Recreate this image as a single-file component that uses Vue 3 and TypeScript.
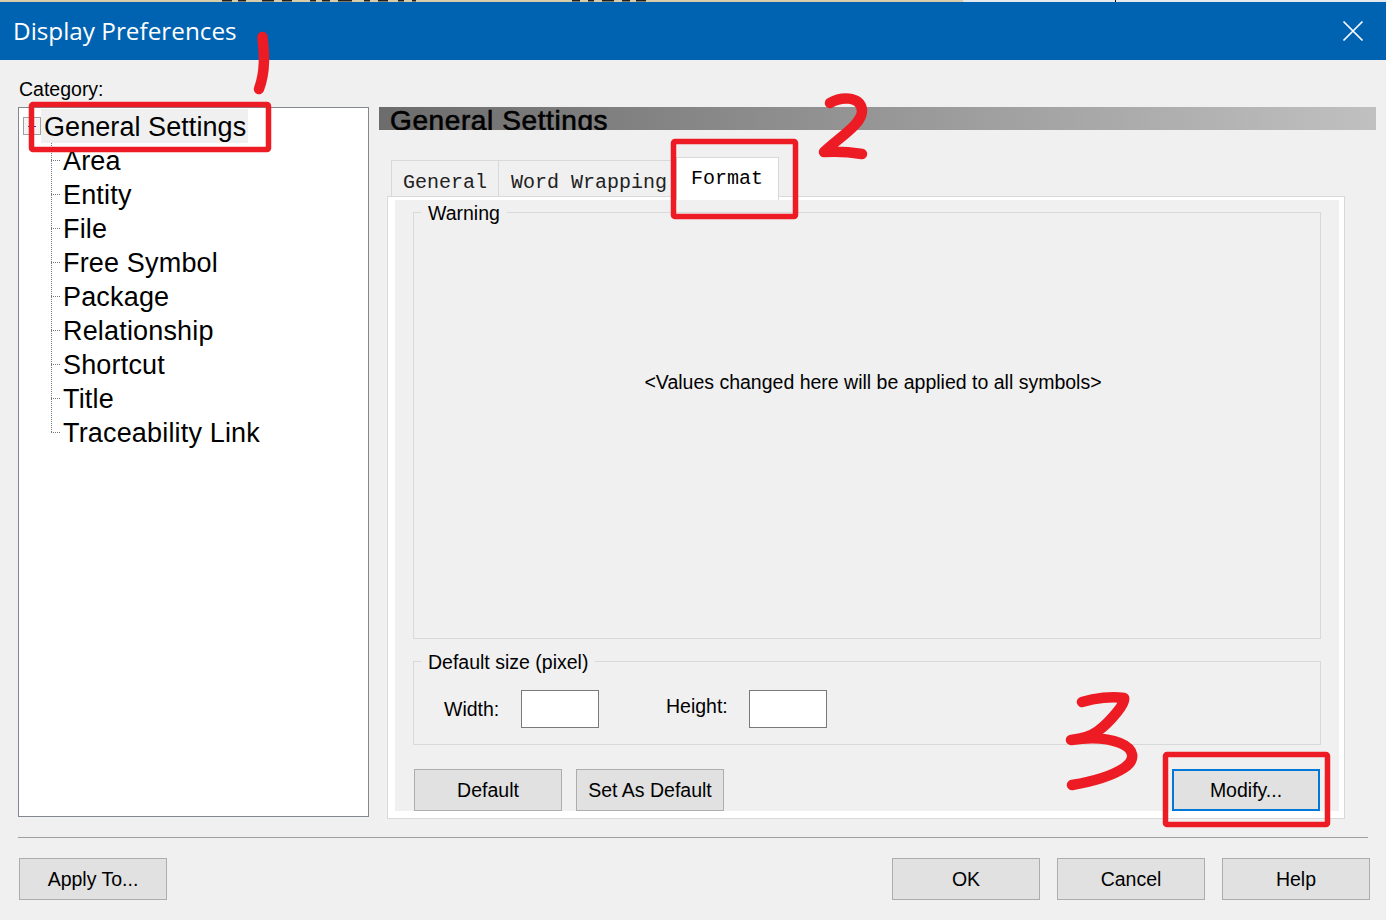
<script setup lang="ts">
const items: string[] = ['Area', 'Entity', 'File', 'Free Symbol', 'Package', 'Relationship', 'Shortcut', 'Title', 'Traceability Link']
</script>

<template>
  <div class="dialog">
    <div class="behind">
      <svg class="behind-svg" width="1386" height="2" viewBox="0 0 1386 2" aria-hidden="true">
        <rect width="963" height="2" fill="#d9cca9" />
        <rect x="963" width="423" height="2" fill="#e4e9ee" />
        <rect x="1115" width="1" height="2" fill="#111" />
        <path d="M222 0h10M238 0h8M262 0h12M282 0h10M310 0h6M322 0h8M338 0h14M364 0h6M378 0h10M398 0h6M412 0h4M572 0h8M588 0h6M602 0h12M622 0h8M636 0h10" stroke="#222" stroke-width="3" fill="none" />
      </svg>
    </div>

    <header class="titlebar">
      <span class="title">Display Preferences</span>
      <svg class="close" width="22" height="22" viewBox="0 0 22 22" aria-hidden="true">
        <path d="M1.5 1.5 20.5 20.5M20.5 1.5 1.5 20.5" stroke="#fff" stroke-width="1.7" fill="none" />
      </svg>
    </header>

    <main class="main">
      <section class="left">
        <div class="category">Category:</div>
        <div class="tree">
          <div class="root-row">
            <span class="expander"><i></i></span>
            <span class="root-label">General Settings</span>
          </div>
          <ul class="tree-list">
            <li v-for="(item, i) in items" :key="item" class="tree-row">
              <span class="conn" :class="{ last: i === items.length - 1 }"></span>
              <span class="tree-label">{{ item }}</span>
            </li>
          </ul>
        </div>
      </section>

      <section class="right">
        <div class="banner"><span>General Settings</span></div>
        <div class="tabs">
          <div class="tab first">General</div>
          <div class="tab second">Word Wrapping</div>
          <div class="tab active">Format</div>
        </div>
        <div class="panel">
          <div class="panel-inner">
            <fieldset class="group warning">
              <legend>Warning</legend>
              <p class="message">&lt;Values changed here will be applied to all symbols&gt;</p>
            </fieldset>
            <fieldset class="group size">
              <legend>Default size (pixel)</legend>
              <div class="size-row">
                <label class="lbl width-lbl">Width:</label>
                <span class="field"></span>
                <label class="lbl height-lbl">Height:</label>
                <span class="field"></span>
              </div>
            </fieldset>
            <div class="panel-actions">
              <button class="btn">Default</button>
              <button class="btn">Set As Default</button>
              <button class="btn focus">Modify...</button>
            </div>
          </div>
        </div>
      </section>
    </main>

    <div class="divider"></div>

    <footer class="footer">
      <button class="btn">Apply To...</button>
      <div class="footer-right">
        <button class="btn">OK</button>
        <button class="btn">Cancel</button>
        <button class="btn">Help</button>
      </div>
    </footer>

    <svg class="marks" width="1386" height="920" viewBox="0 0 1386 920" aria-hidden="true">
      <g fill="none" stroke="#ed1c24" stroke-linecap="round" stroke-linejoin="round">
        <rect x="31.5" y="104.5" width="237" height="45" rx="1.5" stroke-width="5.5" />
        <rect x="673.5" y="141.5" width="122" height="75" rx="1.5" stroke-width="5.5" />
        <rect x="1165.5" y="754.5" width="162" height="70" rx="1.5" stroke-width="5.5" />
        <path d="M262.5 37C264 52 266 70 259 89" stroke-width="10.5" />
        <path d="M830 103C840 97 860 95 862 110C863 124 838 138 824 152C838 151 850 152 862 154" stroke-width="10.5" />
        <path d="M1082 702C1095 698 1112 696 1124 698C1127 702 1110 722 1098 731C1090 737 1080 739 1071 740C1085 738 1105 737 1120 743C1135 749 1136 760 1124 768C1110 777 1090 782 1072 785" stroke-width="10.5" />
      </g>
    </svg>
  </div>
</template>

<style>
html, body { margin: 0; padding: 0; background: #f0f0f0; }
</style>

<style scoped>
.dialog {
  position: relative;
  width: 1386px;
  height: 920px;
  overflow: hidden;
  display: flex;
  flex-direction: column;
  background: #f0f0f0;
  color: #000;
  font-family: "Liberation Sans", Arial, sans-serif;
  font-size: 19.5px;
}
.behind { height: 2px; flex: none; overflow: hidden; }
.behind-svg { display: block; }
.titlebar {
  flex: none;
  height: 58px;
  background: #0063b1;
  display: flex;
  align-items: center;
  justify-content: space-between;
  padding: 0 22px 0 13px;
  color: #fff;
}
.title { font-family: "Open Sans", sans-serif; font-size: 24.3px; line-height: 58px; height: 58px; }
.close { display: block; }

.main { flex: none; height: 777px; display: flex; padding: 19px 0 0 18px; box-sizing: border-box; }
.left { width: 351px; flex: none; }
.category { height: 28px; line-height: 21px; padding-left: 1px; }
.tree {
  height: 710px;
  box-sizing: border-box;
  background: #fff;
  border: 1px solid #828790;
  padding: 1px 0 0 4px;
}
.root-row { display: flex; align-items: center; height: 34px; }
.expander {
  width: 18px;
  height: 18px;
  box-sizing: border-box;
  border: 1px solid #a0a0a0;
  background: #f4f4f4;
  display: flex;
  align-items: center;
  justify-content: center;
  flex: none;
}
.expander i { display: block; width: 8px; height: 1px; background: #3a3aa0; }
.root-label {
  font-size: 27px;
  height: 34px;
  line-height: 37px;
  background: #f0f0f0;
  padding: 0 2px 0 3px;
  letter-spacing: 0.07px;
}
.tree-list { list-style: none; margin: 0; padding: 0 0 0 28px; }
.tree-row { display: flex; height: 34px; align-items: center; font-size: 27px; letter-spacing: 0.17px; }
.conn {
  flex: none;
  width: 12px;
  height: 34px;
  align-self: flex-start;
  background-image:
    repeating-linear-gradient(to bottom, #777 0 1px, transparent 1px 2px),
    repeating-linear-gradient(to right, #777 0 1px, transparent 1px 2px);
  background-size: 1px 100%, 9px 1px;
  background-position: 0 0, 0 17px;
  background-repeat: no-repeat;
}
.conn.last { background-size: 1px 17px, 9px 1px; }
.tree-label { height: 34px; line-height: 37px; }

.right { flex: none; width: 997px; margin-left: 10px; padding-top: 28px; }
.banner {
  height: 23px;
  overflow: hidden;
  background: linear-gradient(to right, #6c6c6c, #c0c0c0);
  padding-left: 11px;
  font-size: 28px;
  line-height: 28px;
  letter-spacing: 0.6px;
}
.banner span { -webkit-text-stroke: 0.6px #000; }
.tabs {
  display: flex;
  align-items: flex-end;
  height: 43px;
  margin-top: 27px;
  margin-left: 12px;
  margin-bottom: -4px;
  position: relative;
  z-index: 1;
  font-family: "Liberation Mono", "DejaVu Sans Mono", monospace;
  font-size: 20px;
}
.tab {
  box-sizing: border-box;
  height: 36px;
  margin-bottom: 4px;
  border: 1px solid #d9d9d9;
  border-bottom: none;
  padding: 10px 0 0 11px;
  line-height: 24px;
  white-space: pre;
  background: #f0f0f0;
  color: #222;
}
.first { width: 107px; border-right: none; }
.second { width: 178px; border-right: none; padding-left: 12px; overflow: hidden; }
.active {
  width: 103px;
  height: 43px;
  margin-bottom: 0;
  background: #fff;
  border-bottom: none;
  padding: 9px 0 0 14px;
  color: #000;
}
.panel {
  margin-left: 8px;
  width: 958px;
  height: 623px;
  box-sizing: border-box;
  border: 1px solid #d9d9d9;
  background: #fff;
  padding: 3px 5px 7px 7px;
}
.panel-inner { height: 100%; background: #f0f0f0; padding: 0 18px 0 18px; box-sizing: border-box; display: flex; flex-direction: column; }
.group { margin: 0; padding: 0; border: 1px solid #d9d9d9; box-sizing: border-box; min-width: 0; }
.group legend { margin-left: 7px; padding: 0 7px; line-height: 26px; height: 24px; }
.warning { height: 439px; flex: none; }
.message { margin: 146px 0 0; text-align: center; padding-left: 12px; line-height: 24px; }
.size { height: 96px; margin-top: 10px; flex: none; }
.size-row { display: flex; align-items: flex-start; padding: 17px 0 0 30px; }
.lbl { line-height: 24px; }
.width-lbl { width: 77px; margin-top: 7px; }
.height-lbl { width: 83px; margin-left: 67px; margin-top: 4px; }
.field { width: 78px; height: 38px; box-sizing: border-box; background: #fff; border: 1px solid #7a7a7a; display: block; }
.panel-actions { display: flex; gap: 14px; margin-top: 24px; padding-left: 1px; }
.btn {
  width: 148px;
  height: 42px;
  box-sizing: border-box;
  background: #e1e1e1;
  border: 1px solid #adadad;
  border-radius: 0;
  padding: 2px 0 0;
  font: inherit;
  color: #000;
  line-height: 1;
}
.focus { margin-left: auto; margin-right: 1px; border: 2px solid #0078d7; }
.divider { margin-left: 18px; width: 1350px; height: 1px; flex: none; background: #a0a0a0; }
.footer { display: flex; justify-content: space-between; padding: 20px 16px 0 19px; }
.footer-right { display: flex; gap: 17px; }
.marks { position: absolute; left: 0; top: 0; pointer-events: none; z-index: 5; }
</style>
